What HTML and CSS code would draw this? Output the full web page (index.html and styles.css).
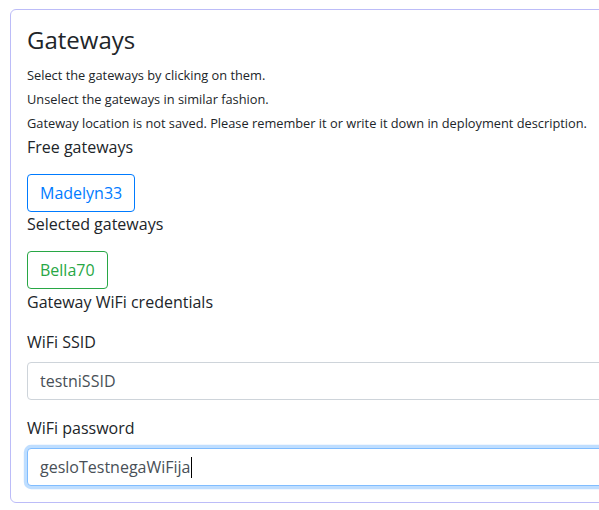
FILE: index.html
```html
<!DOCTYPE html>
<html lang="en">
<head>
<meta charset="utf-8">
<title>Gateways</title>
<link rel="stylesheet" href="styles.css">
</head>
<body>
<div class="card">
  <h4 class="title">Gateways</h4>
  <small class="hint">Select the gateways by clicking on them.</small>
  <small class="hint">Unselect the gateways in similar fashion.</small>
  <small class="hint">Gateway location is not saved. Please remember it or write it down in deployment description.</small>
  <div class="section-label first">Free gateways</div>
  <div class="gateways">
    <button class="btn btn-free" type="button">Madelyn33</button>
  </div>
  <div class="section-label">Selected gateways</div>
  <div class="gateways">
    <button class="btn btn-selected" type="button">Bella70</button>
  </div>
  <div class="section-label creds">Gateway WiFi credentials</div>
  <div class="form-group">
    <label class="field-label" for="ssid">WiFi SSID</label>
    <input class="form-control" id="ssid" type="text" value="testniSSID">
  </div>
  <div class="form-group last">
    <label class="field-label">WiFi password</label>
    <div class="form-control focused">gesloTestnegaWiFija<span class="caret"></span></div>
  </div>
</div>
</body>
</html>
```
FILE: styles.css
```css
html {
  overflow: hidden;
}
body {
  margin: 0;
  padding: 9px 0 0 10px;
  font-family: "Open Sans", "Noto Sans", sans-serif;
  font-size: 16px;
  line-height: 1.5;
  color: #212529;
  background: #fff;
}
.card {
  width: 660px;
  border: 1px solid #bcbcf8;
  border-radius: 6px;
  padding: 16px 16px 16px 16px;
  box-sizing: border-box;
}
.title {
  margin: 0 0 10px 0;
  font-size: 24px;
  font-weight: 400;
  line-height: 1.2;
}
.hint {
  display: block;
  margin-top: 4px;
  font-size: 12.8px;
  line-height: 20px;
}
.section-label {
  font-size: 16px;
  line-height: 24px;
}
.section-label.first {
  margin-top: 2px;
}
.section-label.creds {
  padding-top: 1px;
}
.gateways {
  display: flex;
  gap: 8px;
  margin-top: 15px;
}
.btn {
  font-family: inherit;
  font-size: 16px;
  line-height: 24px;
  padding: 6px 12px;
  background: #fff;
  border: 1px solid;
  border-radius: 4px;
  cursor: pointer;
}
.btn-free {
  color: #007bff;
  border-color: #007bff;
}
.btn-selected {
  color: #28a745;
  border-color: #28a745;
}
.form-group {
  margin-top: 16px;
}
.field-label {
  display: block;
  margin-bottom: 8px;
}
.form-control {
  display: block;
  width: 100%;
  box-sizing: border-box;
  height: 38px;
  padding: 6px 12px;
  font-family: inherit;
  font-size: 16px;
  line-height: 24px;
  color: #495057;
  background: #fff;
  border: 1px solid #ced4da;
  border-radius: 4px;
}
.form-control.focused {
  border-color: #80bdff;
  box-shadow: 0 0 0 3.2px rgba(0, 123, 255, 0.25);
}
.caret {
  display: inline-block;
  width: 1px;
  height: 21px;
  background: #000;
  vertical-align: -5px;
}
```
